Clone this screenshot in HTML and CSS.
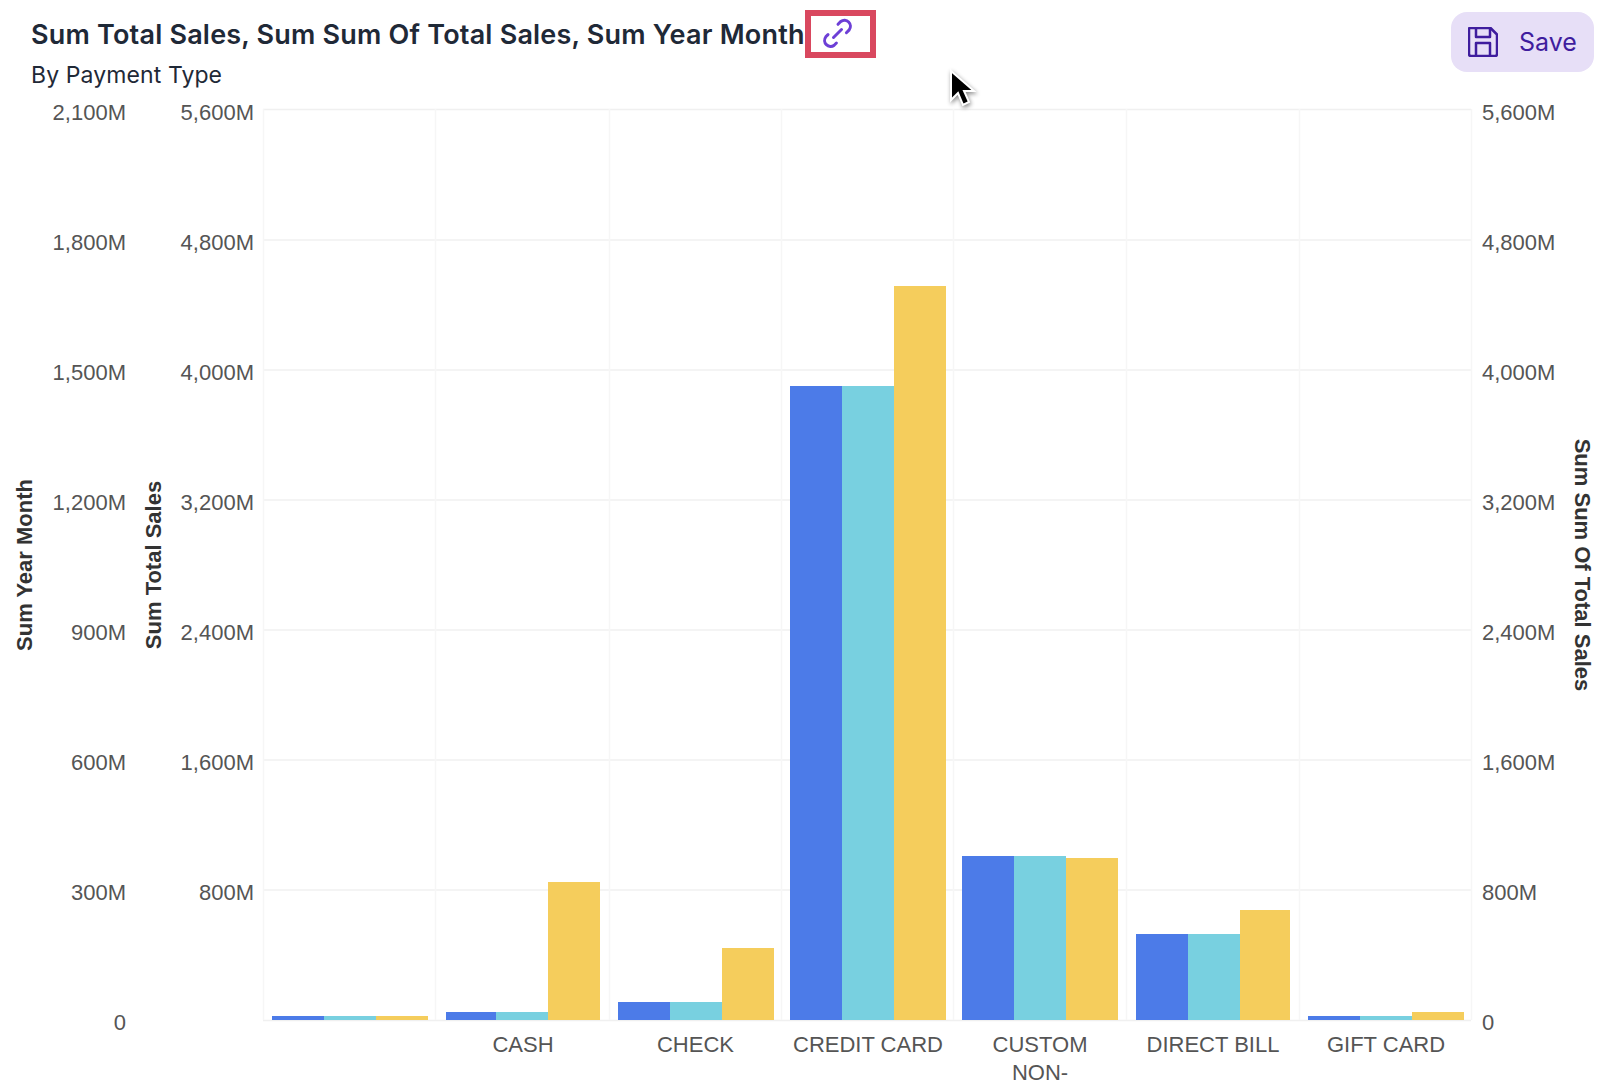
FILE: index.html
```html
<!DOCTYPE html>
<html lang="en">
<head>
    <meta charset="UTF-8">
    <meta name="viewport" content="width=device-width, initial-scale=1.0">
    <title>Sum Total Sales By Payment Type</title>
    <link rel="stylesheet" href="styles.css">
</head>
<body>
    <!-- header -->
    <div class="chart-header">
        <div class="chart-titles">
            <div class="title-row">
                <h1 class="chart-title">Sum Total Sales, Sum Sum Of Total Sales, Sum Year Month</h1>
                <div class="link-box">
                    <svg class="link-icon" viewBox="8 8 34 34">
                        <path d="M24 15.300L26.800 12.500A6 6 0 0 1 35.200 20.900L32.400 23.700"/>
                        <path d="M14 25.600L11.800 27.800A6 6 0 0 0 20.200 36.200L22.400 34"/>
                        <path d="M19.500 28.500L27.500 20.500"/>
                    </svg>
                </div>
            </div>
            <div class="chart-subtitle">By Payment Type</div>
        </div>
        <button class="save-button">
            <svg class="save-icon" viewBox="0 0 30 30">
                <path d="M2 1h20.500l6.500 6.500v19.500a2 2 0 0 1-2 2H3a2 2 0 0 1-2-2V2a1 1 0 0 1 1-1z"/>
                <path d="M8 1v9h14V1"/>
                <path d="M8 29V16h14v13"/>
            </svg>
            <span>Save</span>
        </button>
    </div>

    <!-- chart, drawn in page coordinates -->
    <svg class="chart" viewBox="0 96 1602 988">
        <g class="grid">
            <path d="M263 109.500H1471"/>
            <path d="M263 240H1471"/>
            <path d="M263 370H1471"/>
            <path d="M263 500H1471"/>
            <path d="M263 630H1471"/>
            <path d="M263 760H1471"/>
            <path d="M263 890H1471"/>
            <path d="M263 1020.500H1471"/>
        </g>
        <g class="grid grid-vertical">
            <path d="M263.500 109V1020"/>
            <path d="M435.500 109V1020"/>
            <path d="M609.500 109V1020"/>
            <path d="M781.500 109V1020"/>
            <path d="M953.500 109V1020"/>
            <path d="M1126.500 109V1020"/>
            <path d="M1299.500 109V1020"/>
            <path d="M1471.500 109V1020"/>
        </g>

        <g class="bars-blue">
            <rect x="272" y="1016" width="52" height="4"/>
            <rect x="446" y="1012" width="50" height="8"/>
            <rect x="618" y="1002" width="52" height="18"/>
            <rect x="790" y="386" width="52" height="634"/>
            <rect x="962" y="856" width="52" height="164"/>
            <rect x="1136" y="934" width="52" height="86"/>
            <rect x="1308" y="1016" width="52" height="4"/>
        </g>
        <g class="bars-teal">
            <rect x="324" y="1016" width="52" height="4"/>
            <rect x="496" y="1012" width="52" height="8"/>
            <rect x="670" y="1002" width="52" height="18"/>
            <rect x="842" y="386" width="52" height="634"/>
            <rect x="1014" y="856" width="52" height="164"/>
            <rect x="1188" y="934" width="52" height="86"/>
            <rect x="1360" y="1016" width="52" height="4"/>
        </g>
        <g class="bars-yellow">
            <rect x="376" y="1016" width="52" height="4"/>
            <rect x="548" y="882" width="52" height="138"/>
            <rect x="722" y="948" width="52" height="72"/>
            <rect x="894" y="286" width="52" height="734"/>
            <rect x="1066" y="858" width="52" height="162"/>
            <rect x="1240" y="910" width="50" height="110"/>
            <rect x="1412" y="1012" width="52" height="8"/>
        </g>

        <!-- left axis 1 -->
        <g class="tick tick-end">
            <text x="126" y="120">2,100M</text>
            <text x="126" y="250">1,800M</text>
            <text x="126" y="380">1,500M</text>
            <text x="126" y="510">1,200M</text>
            <text x="126" y="640">900M</text>
            <text x="126" y="770">600M</text>
            <text x="126" y="900">300M</text>
            <text x="126" y="1030">0</text>
        </g>
        <!-- left axis 2 -->
        <g class="tick tick-end">
            <text x="254" y="120">5,600M</text>
            <text x="254" y="250">4,800M</text>
            <text x="254" y="380">4,000M</text>
            <text x="254" y="510">3,200M</text>
            <text x="254" y="640">2,400M</text>
            <text x="254" y="770">1,600M</text>
            <text x="254" y="900">800M</text>
        </g>
        <!-- right axis -->
        <g class="tick">
            <text x="1482" y="120">5,600M</text>
            <text x="1482" y="250">4,800M</text>
            <text x="1482" y="380">4,000M</text>
            <text x="1482" y="510">3,200M</text>
            <text x="1482" y="640">2,400M</text>
            <text x="1482" y="770">1,600M</text>
            <text x="1482" y="900">800M</text>
            <text x="1482" y="1030">0</text>
        </g>
        <!-- categories -->
        <g class="tick tick-mid">
            <text x="523" y="1052">CASH</text>
            <text x="695.500" y="1052">CHECK</text>
            <text x="868" y="1052">CREDIT CARD</text>
            <text x="1040" y="1052">CUSTOM</text>
            <text x="1040" y="1080">NON-</text>
            <text x="1213" y="1052">DIRECT BILL</text>
            <text x="1386" y="1052">GIFT CARD</text>
        </g>

        <text class="axis-title" transform="translate(32 565) rotate(-90)">Sum Year Month</text>
        <text class="axis-title" transform="translate(161 565) rotate(-90)">Sum Total Sales</text>
        <text class="axis-title" transform="translate(1575 565) rotate(90)">Sum Sum Of Total Sales</text>
    </svg>

    <!-- mouse pointer in the capture -->
    <svg class="pointer" viewBox="0 0 26 40">
        <path d="M3 2v29l7-7 5 12 6-3-5-11h10z"/>
    </svg>
</body>
</html>
```

FILE: styles.css
```css
html, body {
    margin: 0;
    padding: 0;
    height: 1084px;
    overflow: hidden;
    background-color: white;
}

body {
    position: relative;
    font-family: Inter, sans-serif;
}

.chart-header {
    height: 96px;
    box-sizing: border-box;
    display: flex;
    justify-content: space-between;
    align-items: flex-start;
    padding: 10px 8px 0 31px;
}

.title-row {
    display: flex;
    align-items: center;
}

.chart-title {
    margin: 0;
    font-size: 27px;
    font-weight: 600;
    letter-spacing: 0.2px;
    color: #1f2937;
    white-space: nowrap;
}

.link-box {
    width: 71px;
    height: 48px;
    box-sizing: border-box;
    border: 6px solid #d9485f;
    display: flex;
    justify-content: center;
    align-items: center;
}

.link-icon {
    width: 34px;
    height: 34px;
    flex-shrink: 0;
    margin-left: -3px;
    margin-top: -1px;
    fill: none;
    stroke: #6d3fd6;
    stroke-width: 3;
    stroke-linecap: round;
}

.chart-subtitle {
    font-size: 23px;
    letter-spacing: 0.1px;
    color: #1f2937;
    margin-top: 3px;
}

.save-button {
    width: 143px;
    height: 60px;
    margin-top: 2px;
    border: none;
    border-radius: 16px;
    background-color: #e7dff7;
    color: #3f1d9e;
    font-family: Inter, sans-serif;
    font-size: 25px;
    display: flex;
    align-items: center;
    gap: 21px;
    padding: 0 0 0 17px;
}

.save-icon {
    width: 30px;
    height: 30px;
    fill: none;
    stroke: #3f1d9e;
    stroke-width: 2.5;
    stroke-linejoin: round;
}

.chart {
    display: block;
    width: 1602px;
    height: 988px;
}

.grid path {
    stroke: #f0f0f0;
    stroke-width: 1.5;
    fill: none;
}

.grid-vertical path {
    stroke: #f6f6f6;
}

.bars-blue rect {
    fill: #4c7be8;
}

.bars-teal rect {
    fill: #78d0e0;
}

.bars-yellow rect {
    fill: #f5cd5c;
}

.tick text {
    font-family: "Liberation Sans", Arial, sans-serif;
    font-size: 22px;
    fill: #555555;
}

.tick-end text {
    text-anchor: end;
}

.tick-mid text {
    text-anchor: middle;
}

.axis-title {
    font-family: "Liberation Sans", Arial, sans-serif;
    font-size: 22px;
    font-weight: bold;
    fill: #333333;
    text-anchor: middle;
}

.pointer {
    position: absolute;
    left: 948px;
    top: 69px;
    width: 26px;
    height: 40px;
    overflow: visible;
    filter: drop-shadow(1px 2px 2px rgba(0, 0, 0, 0.45));
}

.pointer path {
    fill: black;
    stroke: white;
    stroke-width: 2;
}
```
